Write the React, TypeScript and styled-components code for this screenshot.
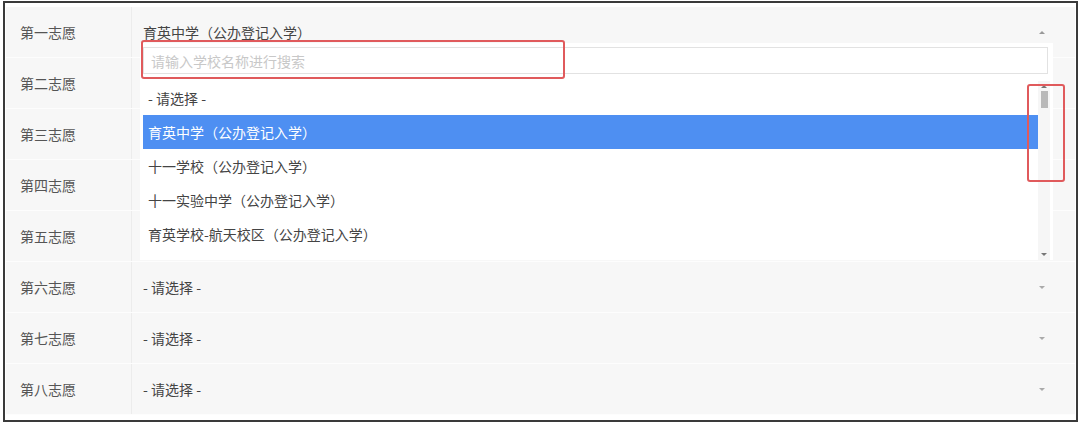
import styled, { createGlobalStyle } from "styled-components";

const GlobalStyle = createGlobalStyle`
  html, body {
    margin: 0;
    background: #ffffff;
  }
  body {
    font-family: "Noto Sans CJK SC", "Noto Sans", sans-serif;
    font-size: 14px;
    color: #444;
  }
`;

const wishes = ["第一志愿", "第二志愿", "第三志愿", "第四志愿", "第五志愿", "第六志愿", "第七志愿", "第八志愿"];

const options = [
  "- 请选择 -",
  "育英中学（公办登记入学）",
  "十一学校（公办登记入学）",
  "十一实验中学（公办登记入学）",
  "育英学校-航天校区（公办登记入学）",
];

// rows 2-5 sit under the open dropdown, so only the others show a value
const isCovered = (i: number) => i > 0 && i < 5;

export default function App() {
  return (
    <>
      <GlobalStyle />
      <SFrame>
        {wishes.map((label, i) => (
          <SRow key={label}>
            <SLabel>{label}</SLabel>
            <SSelect>
              {!isCovered(i) && (
                <>
                  <SValue>{i === 0 ? "育英中学（公办登记入学）" : "- 请选择 -"}</SValue>
                  <SArrow $up={i === 0} />
                </>
              )}
            </SSelect>
          </SRow>
        ))}

        <SDropdown>
          <SSearch placeholder="请输入学校名称进行搜索" />
          <SListWrap>
            <SList>
              {options.map((opt, i) => (
                <SOption key={opt} $active={i === 1}>
                  {opt}
                </SOption>
              ))}
            </SList>
            <SScrollbar>
              <SScrollArrow $up />
              <SThumb />
              <SScrollArrow />
            </SScrollbar>
          </SListWrap>
        </SDropdown>

        <SMark $left={136} $top={37} $width={424} $height={39} />
        <SMark $left={1022} $top={81} $width={38} $height={98} />
      </SFrame>
    </>
  );
}

const SFrame = styled.div`
  position: relative;
  box-sizing: border-box;
  width: 1075px;
  height: 421px;
  margin: 1px 0 0 3px;
  padding: 4px 1px 5px;
  border: 2px solid #3a3a3a;
  display: flex;
  flex-direction: column;
`;

const SRow = styled.div`
  display: grid;
  grid-template-columns: 126px 1fr;
  height: 51px;
  background: #f7f7f7;
  border-bottom: 1px solid #fdfdfd;
  box-sizing: border-box;
`;

const SLabel = styled.div`
  display: flex;
  align-items: center;
  padding-left: 14px;
  color: #555;
  border-right: 1px solid #ececec;
`;

const SSelect = styled.div`
  display: flex;
  align-items: center;
  justify-content: space-between;
  padding: 0 30px 0 11px;
`;

const SValue = styled.span`
  color: #444;
`;

const SArrow = styled.span<{ $up?: boolean }>`
  width: 0;
  height: 0;
  border-left: 3px solid transparent;
  border-right: 3px solid transparent;
  ${({ $up }) => ($up ? "border-bottom: 3px solid #999;" : "border-top: 3px solid #aaa;")}
`;

const SDropdown = styled.div`
  position: absolute;
  left: 135px;
  top: 40px;
  width: 913px;
  height: 217px;
  box-sizing: border-box;
  background: #fff;
  padding: 4px 3px 0 3px;
  display: flex;
  flex-direction: column;
`;

const SSearch = styled.input`
  box-sizing: border-box;
  width: 905px;
  height: 27px;
  border: 1px solid #e2e2e2;
  padding: 0 7px;
  font-family: inherit;
  font-size: 14px;
  color: #444;
  outline: none;
  &::placeholder {
    color: #c8c8c8;
  }
`;

const SListWrap = styled.div`
  flex: 1;
  display: flex;
  margin-top: 7px;
  overflow: hidden;
`;

const SList = styled.div`
  flex: 1;
  display: flex;
  flex-direction: column;
`;

const SOption = styled.div<{ $active?: boolean }>`
  height: 34px;
  flex-shrink: 0;
  display: flex;
  align-items: center;
  padding-left: 5px;
  color: ${({ $active }) => ($active ? "#fff" : "#444")};
  background: ${({ $active }) => ($active ? "#4e8ff2" : "transparent")};
`;

const SScrollbar = styled.div`
  width: 12px;
  background: #f6f6f6;
  display: flex;
  flex-direction: column;
  align-items: center;
  padding: 4px 0;
  box-sizing: border-box;
`;

const SThumb = styled.div`
  width: 7px;
  height: 17px;
  margin-top: 3px;
  background: #b9b9b9;
  margin-bottom: auto;
`;

const SScrollArrow = styled.span<{ $up?: boolean }>`
  width: 0;
  height: 0;
  border-left: 3px solid transparent;
  border-right: 3px solid transparent;
  ${({ $up }) => ($up ? "border-bottom: 3px solid #777;" : "border-top: 3px solid #777;")}
`;

const SMark = styled.div<{ $left: number; $top: number; $width: number; $height: number }>`
  position: absolute;
  left: ${({ $left }) => $left}px;
  top: ${({ $top }) => $top}px;
  width: ${({ $width }) => $width}px;
  height: ${({ $height }) => $height}px;
  box-sizing: border-box;
  border: 2px solid #e05a5c;
  border-radius: 3px;
`;
